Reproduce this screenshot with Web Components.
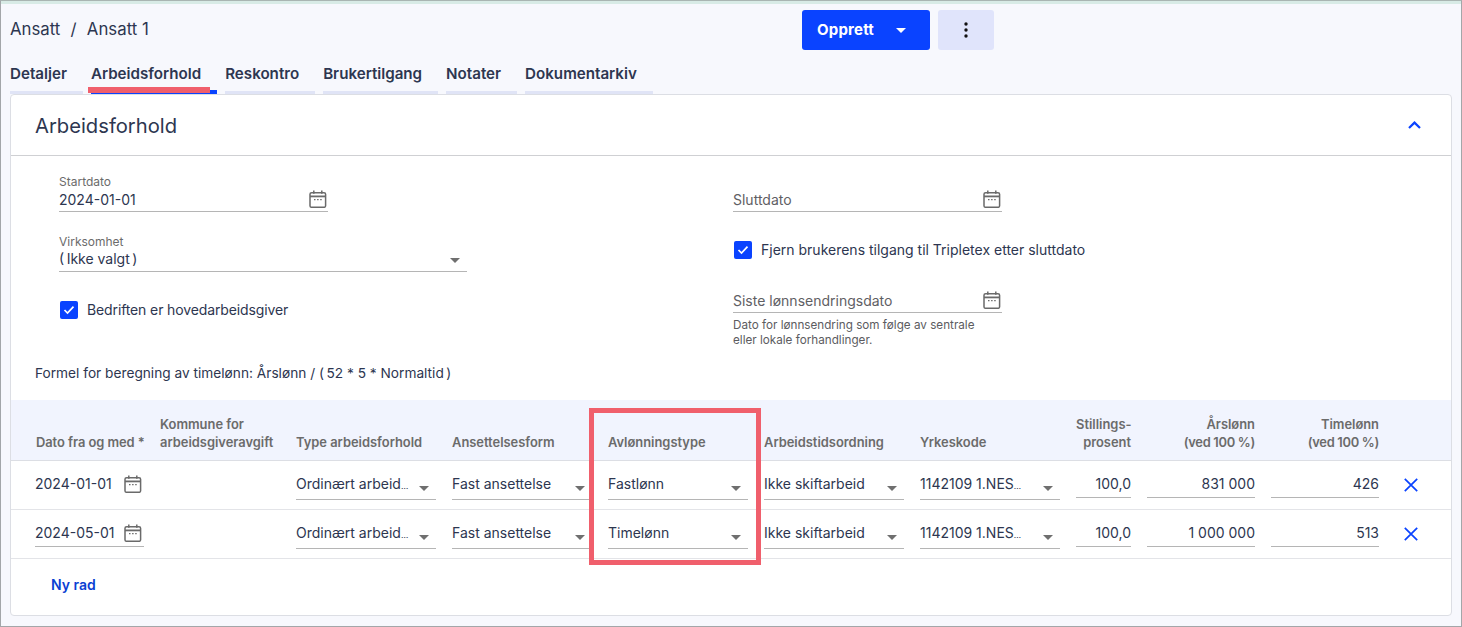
<!DOCTYPE html>
<html lang="no">
<head>
<meta charset="utf-8">
<title>Ansatt 1</title>
<style>
html, body { margin: 0; padding: 0; height: 100%; overflow: hidden; background: #f7f8fd; }
body { font-family: Inter, "Liberation Sans", sans-serif; color: #2d3650; }
</style>
</head>
<body>
<x-app>
    <x-topbar></x-topbar>
    <x-tabs></x-tabs>
    <x-card heading="Arbeidsforhold">
        <x-employment-form></x-employment-form>
        <x-employment-table></x-employment-table>
    </x-card>
    <x-mark style="left:588px;top:407px;width:162px;height:147px"></x-mark>
    <x-mark style="left:87px;top:86px;width:122px;height:6px;border-width:0;background:#f05f6c"></x-mark>
</x-app>

<script>
const CALENDAR = `<svg width="18" height="18" viewBox="0 0 18 18" fill="none" stroke="#6a6a6a" stroke-width="1.5">
    <rect x="1" y="2.7" width="15.6" height="14.6" rx="1.6"/>
    <path d="M1 6.4h15.6" stroke-width="1.8"/>
    <path d="M4.8 .6v3.2M12.8 .6v3.2"/>
    <path d="M5 9.6h1.5M8.1 9.6h1.5M11.2 9.6h1.5" stroke-width="1.3"/>
</svg>`;

class XApp extends HTMLElement {
    constructor() {
        super();
        this.shadowDOM = this.attachShadow({ mode: "open" });
        this.shadowDOM.innerHTML = `
        <style>
        :host {
            display: block;
            position: relative;
            box-sizing: border-box;
            width: 1462px;
            height: 627px;
            padding: 0 9px 0 9px;
            border-left: 1px solid #a3a6a9;
            border-right: 1px solid #a3a6a9;
            border-bottom: 1px solid #a3a6a9;
            border-top: 1px solid #a9b5b2;
            background: #f7f8fd;
        }
        .stripe { height: 3px; margin: 0 -9px; background: #d8ebe6; }
        </style>
        <div class="stripe"></div>
        <slot></slot>`;
    }
}

class XMark extends HTMLElement {
    constructor() {
        super();
        this.attachShadow({ mode: "open" }).innerHTML = `
        <style>
        :host {
            display: block;
            position: absolute;
            border: 5px solid #f05f6c;
            pointer-events: none;
        }
        </style>`;
    }
}

class XTopbar extends HTMLElement {
    constructor() {
        super();
        this.attachShadow({ mode: "open" }).innerHTML = `
        <style>
        :host {
            display: flex;
            align-items: center;
            height: 40px;
            padding-top: 6px;
        }
        .crumbs { width: 792px; font-size: 16.8px; line-height: 40px; margin-top: -2px; }
        .crumbs span { margin: 0 5.5px; }
        .create {
            display: flex;
            align-items: center;
            box-sizing: border-box;
            width: 128px;
            height: 40px;
            padding: 0 0 2px 15px;
            border-radius: 3px;
            background: #0a43ff;
            color: #fff;
            font-size: 15px;
            font-weight: 700;
            letter-spacing: .2px;
        }
        .create svg { margin: 2px 0 0 22px; }
        .more {
            display: flex;
            align-items: center;
            justify-content: center;
            width: 56px;
            height: 40px;
            margin-left: 8px;
            border-radius: 3px;
            background: #e0e4fb;
        }
        </style>
        <div class="crumbs">Ansatt <span>/</span> Ansatt 1</div>
        <div class="create">Opprett
            <svg width="10" height="5" viewBox="0 0 10 5"><path d="M0 0h10L5 5z" fill="#fff"/></svg>
        </div>
        <div class="more">
            <svg width="4" height="16" viewBox="0 0 4 16" fill="#111"><circle cx="2" cy="2" r="1.7"/><circle cx="2" cy="8" r="1.7"/><circle cx="2" cy="14" r="1.7"/></svg>
        </div>`;
    }
}

class XTabs extends HTMLElement {
    constructor() {
        super();
        const tabs = ["Detaljer", "Arbeidsforhold", "Reskontro", "Brukertilgang", "Notater", "Dokumentarkiv"];
        this.attachShadow({ mode: "open" }).innerHTML = `
        <style>
        :host {
            display: flex;
            align-items: flex-end;
            gap: 8px;
            height: 44px;
        }
        .tab {
            box-sizing: border-box;
            height: 44px;
            padding: 12px 16px 0 0;
            border-bottom: 3px solid #e0e4f6;
            font-size: 15.15px;
            line-height: 24px;
            font-weight: 600;
        }
        .tab.active { border-bottom: 4px solid #0a43ff; }
        </style>
        ${tabs.map((t, i) => `<div class="tab ${i === 1 ? "active" : ""}">${t}</div>`).join("")}`;
    }
}

class XCard extends HTMLElement {
    constructor() {
        super();
        this.attachShadow({ mode: "open" }).innerHTML = `
        <style>
        :host {
            display: block;
            box-sizing: border-box;
            height: 522px;
            border: 1px solid #dcdee4;
            border-radius: 4px;
            background: #fff;
        }
        header {
            display: flex;
            align-items: center;
            justify-content: space-between;
            box-sizing: border-box;
            height: 61px;
            padding: 0 30px 0 24px;
            border-bottom: 1px solid #cfd0d3;
            font-size: 20.2px;
        }
        </style>
        <header>
            <span>${this.getAttribute("heading")}</span>
            <svg width="13" height="8" viewBox="0 0 13 8" fill="none" stroke="#0a43ff" stroke-width="2.2"><path d="M1 7l5.5-5.4L12 7"/></svg>
        </header>
        <slot></slot>`;
    }
}

class XField extends HTMLElement {
    constructor() {
        super();
        const label = this.getAttribute("label") || "";
        const value = this.getAttribute("value") || "";
        const placeholder = this.getAttribute("placeholder") || "";
        const width = this.getAttribute("width");
        const isSelect = this.hasAttribute("select");
        const icon = isSelect
            ? `<svg class="arrow" width="10" height="5" viewBox="0 0 10 5"><path d="M0 0h10L5 5z" fill="#6f6f6f"/></svg>`
            : CALENDAR;
        this.attachShadow({ mode: "open" }).innerHTML = `
        <style>
        :host { display: block; width: ${width}px; }
        .label { height: 14px; font-size: 12px; line-height: 14px; color: #6b6b6b; white-space: nowrap; }
        .box {
            display: flex;
            align-items: center;
            justify-content: space-between;
            height: 22px;
            border-bottom: 1px solid #b5b5b5;
            font-size: 14px;
            line-height: 22px;
        }
        .ph { color: #5f6064; }
        .up { margin-top: -2px; }
        svg { margin-right: 1px; margin-top: -2px; }
        .arrow { margin-right: 7px; margin-top: 0; }
        </style>
        <div class="label">${label}</div>
        <div class="box">
            <span class="${value ? "" : "ph"} ${isSelect ? "up" : ""}">${value || placeholder}</span>
            ${icon}
        </div>`;
    }
}

class XCheck extends HTMLElement {
    constructor() {
        super();
        this.attachShadow({ mode: "open" }).innerHTML = `
        <style>
        :host {
            display: flex;
            align-items: center;
            gap: 9px;
            height: 18px;
            padding-left: 1px;
            font-size: 14px;
            line-height: 18px;
        }
        .box {
            display: flex;
            align-items: center;
            justify-content: center;
            width: 18px;
            height: 18px;
            border-radius: 2px;
            background: #0a43ff;
        }
        </style>
        <div class="box">
            <svg width="12" height="10" viewBox="0 0 12 10" fill="none" stroke="#fff" stroke-width="1.7"><path d="M1.5 5l3 3 6-6.4"/></svg>
        </div>
        <slot></slot>`;
    }
}

class XEmploymentForm extends HTMLElement {
    constructor() {
        super();
        this.attachShadow({ mode: "open" }).innerHTML = `
        <style>
        :host { display: block; }
        .cols { display: grid; grid-template-columns: 674px 1fr; padding: 19px 0 0 48px; }
        .col { display: flex; flex-direction: column; }
        .virk { margin-top: 23px; }
        .chk { margin-top: 29px; }
        .tight { letter-spacing: -.12px; }
        .siste { margin-top: 17px; }
        .help { margin-top: 5px; font-size: 11.7px; line-height: 15px; color: #5c5c5f; }
        .formula {
            margin: 17px 0 18px 24px;
            height: 17px;
            font-size: 13.7px;
            line-height: 17px;
            font-feature-settings: "calt" 0;
        }
        </style>
        <div class="cols">
            <div class="col">
                <x-field label="Startdato" value="2024-01-01" width="269"></x-field>
                <x-field class="virk" label="Virksomhet" value="(&#8201;Ikke valgt&#8201;)" width="408" select></x-field>
                <x-check class="chk tight">Bedriften er hovedarbeidsgiver</x-check>
            </div>
            <div class="col">
                <x-field placeholder="Sluttdato" width="269"></x-field>
                <x-check class="chk">Fjern brukerens tilgang til Tripletex etter sluttdato</x-check>
                <x-field class="siste" placeholder="Siste lønnsendringsdato" width="269"></x-field>
                <div class="help">Dato for lønnsendring som følge av sentrale<br>eller lokale forhandlinger.</div>
            </div>
        </div>
        <div class="formula">Formel for beregning av timelønn: Årslønn / (&#8201;52 * 5 * Normaltid&#8201;)</div>`;
    }
}

const COLUMNS = "109px 120px 140px 140px 140px 140px 140px 55px 108px 108px 1fr";

class XEmploymentTable extends HTMLElement {
    constructor() {
        super();
        this.shadowDOM = this.attachShadow({ mode: "open" });
        this.rows = [
            { date: "2024-01-01", plain: true, type: "Fastlønn", lonn: "831 000", time: "426" },
            { date: "2024-05-01", plain: false, type: "Timelønn", lonn: "1 000 000", time: "513" },
        ];
    }

    set rows(rows) {
        this._rows = rows;
        this.render();
    }

    select(text, cut) {
        return `<div class="sel"><span>${text}${cut ? '<span class="dots">…</span>' : ""}</span><svg width="10" height="5" viewBox="0 0 10 5"><path d="M0 0h10L5 5z" fill="#6f6f6f"/></svg></div>`;
    }

    render() {
        this.shadowDOM.innerHTML = `
        <style>
        :host { display: block; }
        .row {
            display: grid;
            grid-template-columns: ${COLUMNS};
            column-gap: 16px;
            padding-left: 24px;
            box-sizing: border-box;
        }
        .head {
            height: 61px;
            align-items: end;
            padding-bottom: 8px;
            background: #f1f4fe;
            border-bottom: 1px solid #dcdee4;
            font-size: 12.9px;
            line-height: 18px;
            font-weight: 600;
            color: #6b6b6b;
            white-space: nowrap;
        }
        .head .first { padding-left: 1px; letter-spacing: -.05px; }
        .ved { letter-spacing: -.3px; }
        .right { text-align: right; }
        .body {
            height: 49px;
            border-bottom: 1px solid #e3e4e8;
            font-size: 14px;
        }
        .date, .num, .sel { height: 37px; box-sizing: border-box; line-height: 22px; padding-top: 12px; }
        .date {
            display: flex;
            justify-content: space-between;
            border-bottom: 1px solid #b5b5b5;
        }
        .date.plain { border-bottom-color: transparent; }
        .date svg { margin: 2px 2px 0 0; }
        .num { text-align: right; border-bottom: 1px solid #b5b5b5; }
        .sel {
            display: flex;
            justify-content: space-between;
            height: 39px;
            border-bottom: 1px solid #b5b5b5;
            white-space: nowrap;
        }
        .sel svg { margin: 13px 7px 0 0; }
        .dots { font-size: 8.5px; }
        .x { margin: 17px 0 0 9px; }
        .foot {
            padding: 17px 0 0 40px;
            font-size: 14px;
            line-height: 18px;
            font-weight: 600;
            color: #0b3fd3;
        }
        </style>
        <div class="row head">
            <div class="first">Dato fra og med *</div>
            <div>Kommune for<br>arbeidsgiveravgift</div>
            <div>Type arbeidsforhold</div>
            <div>Ansettelsesform</div>
            <div>Avlønningstype</div>
            <div>Arbeidstidsordning</div>
            <div>Yrkeskode</div>
            <div class="right">Stillings-<br>prosent</div>
            <div class="right">Årslønn<br><span class="ved">(ved 100 %)</span></div>
            <div class="right">Timelønn<br><span class="ved">(ved 100 %)</span></div>
            <div></div>
        </div>
        ${this._rows.map((r) => `
        <div class="row body">
            <div class="date ${r.plain ? "plain" : ""}"><span>${r.date}</span>${CALENDAR}</div>
            <div></div>
            ${this.select("Ordinært arbeid", true)}
            ${this.select("Fast ansettelse")}
            ${this.select(r.type)}
            ${this.select("Ikke skiftarbeid")}
            ${this.select("1142109 1.NES", true)}
            <div class="num">100,0</div>
            <div class="num">${r.lonn}</div>
            <div class="num">${r.time}</div>
            <svg class="x" width="14" height="14" viewBox="0 0 14 14" fill="none" stroke="#0a43ff" stroke-width="1.7"><path d="M.8.8l12.4 12.4M13.2.8L.8 13.2"/></svg>
        </div>`).join("")}
        <div class="foot">Ny rad</div>`;
    }
}

customElements.define("x-app", XApp);
customElements.define("x-mark", XMark);
customElements.define("x-topbar", XTopbar);
customElements.define("x-tabs", XTabs);
customElements.define("x-card", XCard);
customElements.define("x-field", XField);
customElements.define("x-check", XCheck);
customElements.define("x-employment-form", XEmploymentForm);
customElements.define("x-employment-table", XEmploymentTable);
</script>
</body>
</html>
